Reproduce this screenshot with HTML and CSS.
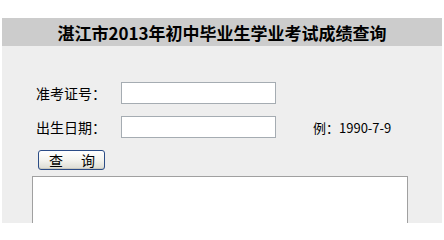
FILE: index.html
```html
<!DOCTYPE html>
<html lang="zh-CN">
<head>
<meta charset="utf-8">
<title>湛江市2013年初中毕业生学业考试成绩查询</title>
<link rel="stylesheet" href="styles.css">
</head>
<body>
<div class="page">
  <div class="title">湛江市2013年初中毕业生学业考试成绩查询</div>
  <div class="main">
    <div class="row">
      <label class="label">准考证号：</label>
      <input class="field" type="text">
    </div>
    <div class="row">
      <label class="label">出生日期：</label>
      <input class="field" type="text">
      <span class="hint">例：1990-7-9</span>
    </div>
    <button class="btn" type="button"><span>查</span><span>询</span></button>
    <div class="result"></div>
  </div>
</div>
</body>
</html>
```
FILE: styles.css
```css
html, body {
  margin: 0;
  padding: 0;
  background: #ffffff;
  height: 100%;
  overflow: hidden;
}
body {
  font-family: "Noto Sans CJK SC", "Liberation Sans", sans-serif;
  color: #000;
}
.page {
  margin: 18px 2px 0 2px;
}
.title {
  height: 28px;
  background: #cccccc;
  display: flex;
  align-items: center;
  justify-content: center;
  font-size: 17px;
  font-weight: bold;
  line-height: 1;
}
.main {
  box-sizing: border-box;
  background: #eeeeee;
  padding: 36px 0 0 30px;
  height: 177px;
  overflow: hidden;
  display: flex;
  flex-direction: column;
  align-items: flex-start;
}
.row {
  display: flex;
  align-items: center;
  height: 22px;
  margin-bottom: 12px;
  flex-shrink: 0;
}
.label {
  width: 85px;
  padding-left: 4px;
  font-size: 14px;
  line-height: 1;
}
.field {
  box-sizing: border-box;
  width: 155px;
  height: 22px;
  margin: 0;
  border: 1px solid #a5acb2;
  background: #ffffff;
  padding: 0 3px;
}
.hint {
  margin-left: 37px;
  font-size: 13px;
  line-height: 1;
}
.btn {
  box-sizing: border-box;
  flex-shrink: 0;
  margin: 0 0 0 6px;
  width: 67px;
  height: 20px;
  padding: 0 9px 0 10px;
  border: 1px solid #2b4c86;
  border-radius: 3px;
  background: linear-gradient(#ffffff 0%, #f4f4ef 50%, #dcdcd3 100%);
  box-shadow: inset 0 -1px 0 #c9c9bf;
  display: flex;
  align-items: center;
  justify-content: space-between;
  font-family: "Noto Sans CJK SC", sans-serif;
  font-size: 14px;
  line-height: 1;
  color: #000;
}
.result {
  box-sizing: border-box;
  flex-shrink: 0;
  margin-top: 6px;
  width: 376px;
  height: 60px;
  background: #ffffff;
  border: 1px solid #a0a0a0;
}
```
